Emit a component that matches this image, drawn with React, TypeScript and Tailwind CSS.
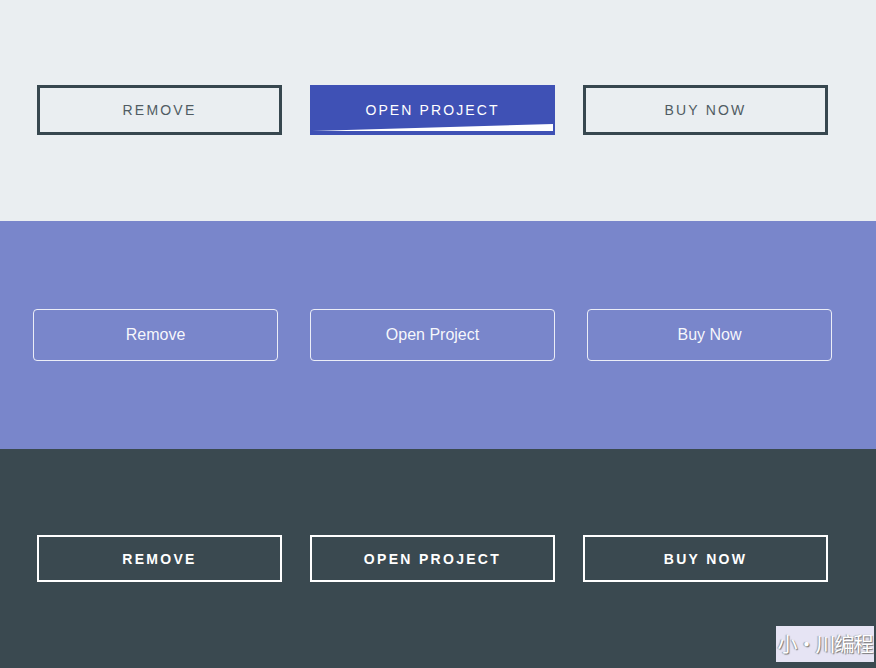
import React from 'react';

const font = { fontFamily: '"Liberation Sans", Arial, sans-serif' };

function OutlineDark({ label }: { label: string }) {
  return (
    <button className="flex h-[50px] w-[245px] items-center justify-center border-[3px] border-[#37474f] bg-transparent text-[14px] tracking-[2.2px] text-[#505c63]">
      {label}
    </button>
  );
}

function WedgeButton({ label }: { label: string }) {
  return (
    <button className="relative flex h-[50px] w-[245px] items-center justify-center overflow-hidden border-2 border-[#3f51b5] bg-[#3f51b5] text-[14px] tracking-[2.1px] text-white">
      <span className="relative">{label}</span>
      {/* white slanted sweep at the bottom */}
      <svg className="absolute bottom-0 left-0 h-[12px] w-full" viewBox="0 0 241 12" preserveAspectRatio="none">
        <polygon points="0,10 241,3 241,10 0,10" fill="#ffffff" />
      </svg>
    </button>
  );
}

function GhostButton({ label }: { label: string }) {
  return (
    <button className="flex h-[52px] w-[245px] items-center justify-center rounded-[4px] border border-white/85 text-[16px] text-white/95">
      {label}
    </button>
  );
}

function BoldButton({ label }: { label: string }) {
  return (
    <button className="flex h-[47px] w-[245px] items-center justify-center border-2 border-white pt-[1px] text-[14px] font-bold tracking-[2.3px] text-white">
      {label}
    </button>
  );
}

export default function App() {
  return (
    <div className="relative flex h-[668px] w-[876px] flex-col overflow-hidden" style={font}>
      <section className="flex h-[221px] items-start gap-[28px] bg-[#eaeef1] pl-[37px] pt-[85px]">
        <OutlineDark label="REMOVE" />
        <WedgeButton label="OPEN PROJECT" />
        <OutlineDark label="BUY NOW" />
      </section>

      <section className="flex h-[228px] items-start gap-[32px] bg-[#7986cb] pl-[33px] pt-[88px]">
        <GhostButton label="Remove" />
        <GhostButton label="Open Project" />
        <GhostButton label="Buy Now" />
      </section>

      <section className="flex flex-1 items-start gap-[28px] bg-[#3a4950] pl-[37px] pt-[86px]">
        <BoldButton label="REMOVE" />
        <BoldButton label="OPEN PROJECT" />
        <BoldButton label="BUY NOW" />
      </section>

      {/* watermark */}
      <div className="absolute bottom-[6px] right-[2px] flex h-[36px] w-[98px] items-center justify-center bg-[#e6e4f4]">
        <span
          className="whitespace-nowrap text-[20px] tracking-[-1px] text-white"
          style={{ fontFamily: '"Noto Sans CJK SC", sans-serif', textShadow: '1px 1px 1px #777, -1px 0 1px #999' }}
        >
          小·川编程
        </span>
      </div>
    </div>
  );
}
